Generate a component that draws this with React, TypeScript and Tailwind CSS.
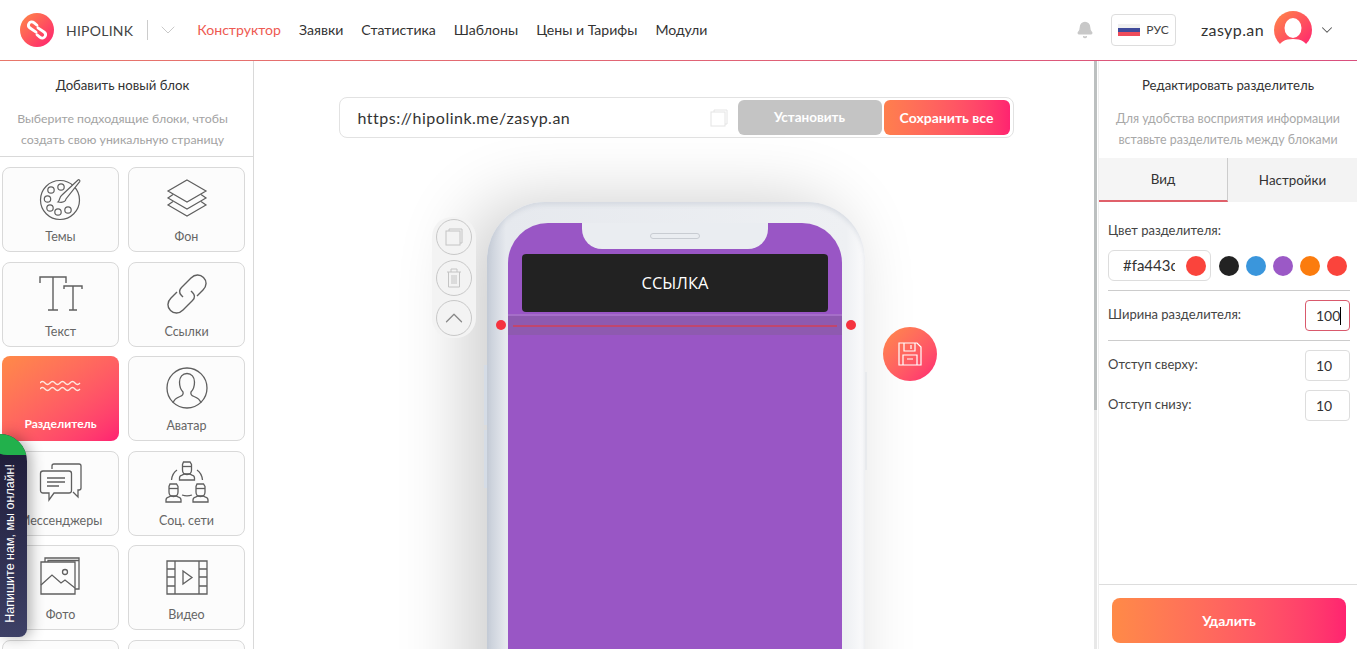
import React from 'react';
import { Bell, ChevronDown, ChevronUp } from 'lucide-react';

const font = { fontFamily: '"Lato", "Noto Sans", sans-serif' };

const Grad = ({ id }: { id: string }) => (
    <defs>
        <linearGradient id={id} x1="0" y1="0" x2="1" y2="1">
            <stop offset="0" stopColor="#ff8a47" />
            <stop offset="1" stopColor="#ff1f72" />
        </linearGradient>
    </defs>
);

const Logo = () => (
    <svg width="34" height="34" viewBox="0 0 36 36">
        <Grad id="logoGrad" />
        <circle cx="18" cy="18" r="18" fill="url(#logoGrad)" />
        <g fill="none" stroke="#fff" strokeWidth="3" strokeLinecap="round">
            <path d="M18 13l-3-2.5c-2-1.7-4.6-1.2-5.6.7-.9 1.7-.4 3.6 1.2 4.7l6.4 4.4" />
            <path d="M18 23l3 2.5c2 1.7 4.6 1.2 5.6-.7.9-1.7.4-3.6-1.2-4.7l-6.4-4.4" />
        </g>
    </svg>
);

const iconProps = {
    width: 44,
    height: 44,
    viewBox: '0 0 44 44',
    fill: 'none',
    stroke: '#5f5f5f',
    strokeWidth: 1.2,
};

const IconPalette = () => (
    <svg {...iconProps}>
        <circle cx="21" cy="23" r="19.5" />
        <circle cx="22" cy="10" r="3.2" />
        <circle cx="12" cy="13" r="3.2" />
        <circle cx="8.5" cy="22" r="3.2" />
        <circle cx="11" cy="31" r="3.2" />
        <circle cx="19" cy="35" r="3.2" />
        <circle cx="29" cy="33" r="3.2" />
        <path d="M23 18L39 3c1-.8 2.400.6 1.700 1.600L27 22c-.5 2.500-3 4-8 3 2-1.500 1-5 4-7z" fill="#fcfcfc" />
    </svg>
);

const IconLayers = () => (
    <svg {...iconProps}>
        <path d="M22 3L41 14 22 25 3 14z" />
        <path d="M8 17.500L3 21 22 32 41 21 36 17.500" />
        <path d="M8 24.500L3 28 22 39 41 28 36 24.500" />
    </svg>
);

const IconText = () => (
    <svg {...iconProps} strokeWidth={1.4}>
        <path d="M1 11V5h26v6M14 5v33M9 38h10" />
        <path d="M25 17v-3h18v3M34 14v24M30 38h8" />
    </svg>
);

const IconLink = () => (
    <svg {...iconProps} strokeWidth={1.4}>
        <path d="M18 25l-1.500-1.500c-2.500-2.500-2.500-5.500 0-8L26 6c4-4 9-4 12.500-.5S42 14 38 18l-6 6" />
        <path d="M26 19l1.500 1.500c2.500 2.500 2.500 5.500 0 8L18 38c-4 4-9 4-12.500.5S2 30 6 26l6-6" />
    </svg>
);

const IconWaves = () => (
    <svg width="42" height="12" viewBox="0 0 42 12" fill="none" stroke="#ffe8e0" strokeWidth="1.3">
        <path d="M0 3q2.500-3 5 0t5 0 5 0 5 0 5 0 5 0 5 0 5 0" />
        <path d="M0 9q2.500-3 5 0t5 0 5 0 5 0 5 0 5 0 5 0 5 0" />
    </svg>
);

const IconAvatar = () => (
    <svg {...iconProps} strokeWidth={1.3}>
        <circle cx="22" cy="22" r="20" />
        <path d="M8 37c1-3.500 3-5 7-6.500 3-1 3.500-2.500 3-4.500-2.500-2.500-3.500-6-3.500-10 0-5 3-8.500 7.500-8.500S29.500 11 29.500 16c0 4-1 7.500-3.500 10-.5 2 0 3.500 3 4.500 4 1.500 6 3 7 6.500" />
    </svg>
);

const IconChat = () => (
    <svg {...iconProps} strokeWidth={1.3}>
        <path d="M13 8V5c0-1.500 1-2 2-2h25c1 0 2 .5 2 2v22c0 1-1 2-2 2h-1v7l-5-5" />
        <path d="M4 10h26c1.500 0 2.500 1 2.500 2.500v17c0 1.500-1 2.500-2.500 2.500H15l-5 7v-7H4c-1.500 0-2.500-1-2.500-2.500v-17C1.500 11 2.500 10 4 10z" fill="#fcfcfc" />
        <path d="M8 17h18M8 21h18M8 25h12" />
    </svg>
);

const Person = ({ x, y }: { x: number; y: number }) => (
    <g transform={`translate(${x} ${y})`}>
        <path d="M4 0h6.500L12 2.500V8c0 3-2 4.500-4.500 4.500S3 11 3 8V2.500z" />
        <path d="M3 4.500h9" />
        <path d="M0 18v-2c0-1.500 1-2.500 2.500-2.800L5 12h5l2.500 1.200c1.500.3 2.500 1.300 2.500 2.800v2z" />
    </g>
);

const IconSocial = () => (
    <svg {...iconProps} strokeWidth={1.3}>
        <Person x={14.500} y={1} />
        <Person x={1} y={23} />
        <Person x={28} y={23} />
        <path d="M12 9c-3 2-5 5-5.500 10M32 9c3 2 5 5 5.500 10M17 34c3 1 7 1 10 0" />
    </svg>
);

const IconPhoto = () => (
    <svg {...iconProps} strokeWidth={1.3}>
        <path d="M6 7V3h34v31h-4" />
        <path d="M9 7V5.500h31" />
        <path d="M2 7h34v32H2z" fill="#fcfcfc" />
        <path d="M2 30l11-10 9 8 4-3 10 8" />
        <circle cx="26" cy="17" r="2.500" />
    </svg>
);

const IconVideo = () => (
    <svg {...iconProps} strokeWidth={1.3}>
        <path d="M2 6h40v33H2z" />
        <path d="M10 6v33M34 6v33M2 14h8M2 22h8M2 31h8M34 14h8M34 22h8M34 31h8" />
        <path d="M18 16l9 6.500-9 6.500z" />
    </svg>
);

const blocks = [
    { label: 'Темы', icon: <IconPalette /> },
    { label: 'Фон', icon: <IconLayers /> },
    { label: 'Текст', icon: <IconText /> },
    { label: 'Ссылки', icon: <IconLink /> },
    { label: 'Разделитель', icon: <IconWaves />, active: true },
    { label: 'Аватар', icon: <IconAvatar /> },
    { label: 'Мессенджеры', icon: <IconChat /> },
    { label: 'Соц. сети', icon: <IconSocial /> },
    { label: 'Фото', icon: <IconPhoto /> },
    { label: 'Видео', icon: <IconVideo /> },
    { label: '', icon: null },
    { label: '', icon: null },
];

const BlockCard = ({ label, icon, active }: { label: string; icon: React.ReactNode; active?: boolean }) => (
    <div
        className={`h-[85px] rounded-lg flex flex-col items-center ${
            active
                ? 'bg-gradient-to-br from-[#ff8a47] to-[#ff1f72] text-white font-bold pt-[24px]'
                : 'bg-[#fcfcfc] border border-[#d9d9d9] text-[#666] pt-[8px]'
        }`}
    >
        <div className={active ? 'h-[34px]' : 'h-[46px] flex items-center'}>{icon}</div>
        <span className={`leading-4 ${active ? 'text-[12px] mt-[2px]' : 'text-[12.500px] mt-[7px]'}`}>{label}</span>
    </div>
);

const NavLink = ({ children, active }: { children: React.ReactNode; active?: boolean }) => (
    <span className={`text-[14.100px] ${active ? 'text-[#ee5a52]' : 'text-[#333]'}`}>{children}</span>
);

const Header = () => (
    <header className="shrink-0 bg-white">
        <div className="h-[60px] flex items-center pl-[20px] pr-[21px]">
            <Logo />
            <span className="ml-[12px] text-[14px] tracking-[0.25px] text-[#444]">HIPOLINK</span>
            <div className="ml-[14px] h-[20px] w-px bg-[#ccc]" />
            <ChevronDown size={24} strokeWidth={0.8} className="ml-[8px] text-[#bbb]" />
            <nav className="ml-[17px] flex gap-[18px]">
                <NavLink active>Конструктор</NavLink>
                <NavLink>Заявки</NavLink>
                <NavLink>Статистика</NavLink>
                <NavLink>Шаблоны</NavLink>
                <NavLink>Цены и Тарифы</NavLink>
                <NavLink>Модули</NavLink>
            </nav>
            <div className="ml-auto flex items-center">
                <Bell size={18} fill="#c8c8c8" stroke="#c8c8c8" />
                <div className="ml-[17px] w-[65px] h-[32px] border border-[#ddd] rounded flex items-center justify-center gap-[6px]">
                    <div className="w-[22px] h-[12px] flex flex-col">
                        <div className="h-1 bg-[#f0f0f0]" />
                        <div className="h-1 bg-[#3f4a9a]" />
                        <div className="h-1 bg-[#ee4b5a]" />
                    </div>
                    <span className="text-[12px] text-[#444]">РУС</span>
                </div>
                <span className="ml-[25px] text-[16px] text-[#333] tracking-[0.4px]">zasyp.an</span>
                <svg width="40" height="40" viewBox="0 0 40 40" className="ml-[9px]">
                    <Grad id="avatarGrad" />
                    <circle cx="20" cy="20" r="19" fill="url(#avatarGrad)" />
                    <ellipse cx="20" cy="18" rx="8.500" ry="10" fill="#fff" />
                    <path d="M4 40c2-8 8-11 16-11s14 3 16 11z" fill="#fff" />
                </svg>
                <ChevronDown size={18} strokeWidth={1.4} className="ml-[5px] text-[#555]" />
            </div>
        </div>
        <div className="h-px bg-gradient-to-r from-[#e8776a] to-[#d94f7e]" />
    </header>
);

const LeftPanel = () => (
    <aside className="w-[254px] shrink-0 border-r border-[#d9d9d9] flex flex-col overflow-hidden">
        <div className="h-[96px] shrink-0 border-b border-[#d9d9d9] text-center pr-[8px]">
            <div className="mt-[14px] text-[13.200px] leading-5 text-[#333]">Добавить новый блок</div>
            <div className="mt-[13px] text-[12.300px] leading-[21px] text-[#a3a3a3]">
                Выберите подходящие блоки, чтобы
                <br />
                создать свою уникальную страницу
            </div>
        </div>
        <div className="pt-[10px] pl-[2px] grid grid-cols-[117px_117px] gap-x-[9px] gap-y-[9.500px]">
            {blocks.map((b, i) => (
                <BlockCard key={i} label={b.label} icon={b.icon} active={b.active} />
            ))}
        </div>
    </aside>
);

const RoundTool = ({ children }: { children: React.ReactNode }) => (
    <div className="w-[36px] h-[36px] rounded-full border border-[#c8c8c8] flex items-center justify-center">{children}</div>
);

const Phone = () => (
    <div className="relative mt-[64px] w-[378px] h-[600px] shrink-0 rounded-t-[58px] bg-[linear-gradient(90deg,#c5ccd7_0%,#e6e9ee_5%,#eef0f3_95%,#fbfbfc_100%)] shadow-[-20px_0_70px_rgba(0,0,0,0.2),inset_0_3px_4px_rgba(190,197,208,0.45)] pt-[21px] pl-[21px] pr-[23px]">
        <div className="absolute left-[-3px] top-[163px] w-[3px] h-[60px] bg-[#d5dce6]" />
        <div className="absolute left-[-3px] top-[228px] w-[3px] h-[58px] bg-[#d5dce6]" />
        <div className="absolute right-[-2px] top-[170px] w-[2px] h-[98px] bg-[#e8eaed]" />
        <div className="relative h-full rounded-t-[40px] bg-[#9956c5] pt-[31px]">
            <div className="absolute top-0 left-[74px] w-[186px] h-[26px] rounded-b-[20px] bg-[#eaedf1] flex items-center justify-center">
                <div className="w-[50px] h-[6px] rounded-full border border-[#c8ccd2]" />
            </div>
            <div className="mx-[14px] h-[58px] rounded-sm bg-[#222] flex items-center justify-center text-white text-[16.500px] font-medium [font-family:'Open_Sans',sans-serif]">
                ССЫЛКА
            </div>
            <div className="mt-[2px] h-[21px] bg-[#8e5ab0] border-t-2 border-[#a56ec8] flex items-center px-[5px]">
                <div className="w-full h-[2px] bg-[#c0466e]" />
            </div>
        </div>
        <div className="absolute left-[9px] top-[118px] w-[10px] h-[10px] rounded-full bg-[#f5333f]" />
        <div className="absolute right-[9px] top-[118px] w-[10px] h-[10px] rounded-full bg-[#f5333f]" />
        <div className="absolute left-[-55px] top-[15px] w-[44px] flex flex-col items-center gap-[4.500px] py-[2px] bg-[#f3f3f3] rounded-[20px]">
            <RoundTool>
                <svg width="18" height="18" viewBox="0 0 18 18" fill="none" stroke="#c4c4c4" strokeWidth="1">
                    <path d="M4 3V1h13v14h-2" />
                    <rect x="1" y="3" width="14" height="14" />
                </svg>
            </RoundTool>
            <RoundTool>
                <svg width="16" height="20" viewBox="0 0 16 20" fill="none" stroke="#c4c4c4" strokeWidth="1">
                    <path d="M1 4h14M5 4V1h6v3M2.500 4v15h11V4M6 7v9M8 7v9M10 7v9" />
                </svg>
            </RoundTool>
            <RoundTool>
                <ChevronUp size={30} strokeWidth={1} className="text-[#888]" />
            </RoundTool>
        </div>
        <div className="absolute right-[-72px] top-[125px] w-[54px] h-[54px] rounded-full bg-gradient-to-br from-[#ff8a47] to-[#ff1f72] flex items-center justify-center">
            <svg width="24" height="24" viewBox="0 0 24 24" fill="none" stroke="#fff" strokeWidth="1.200">
                <path d="M1 1h18l4 4v18H1z" />
                <path d="M6 1v8h11V1M13 3v4M5 23V13h14v10M9 17h6" />
            </svg>
        </div>
    </div>
);

const CenterPanel = () => (
    <main className="flex-1 min-w-0 flex flex-col items-center overflow-hidden">
        <div className="mt-[36px] w-[675px] h-[41px] shrink-0 flex items-center border border-[#e2e2e2] rounded-lg pr-[3px] bg-white">
            <span className="ml-[18px] text-[16px] tracking-[0.5px] text-[#333]">https://hipolink.me/zasyp.an</span>
            <svg width="18" height="18" viewBox="0 0 18 18" fill="none" stroke="#e4e4e4" strokeWidth="1" className="ml-auto mr-[10px]">
                <path d="M4 3V1h13v14h-2" />
                <rect x="1" y="3" width="14" height="14" />
            </svg>
            <div className="w-[144px] h-[35px] rounded-md bg-[#c4c4c4] text-white font-bold text-[13.500px] flex items-center justify-center">Установить</div>
            <div className="ml-[2px] w-[126px] h-[35px] rounded-md bg-gradient-to-r from-[#ff7f4d] to-[#ff2370] text-white text-[14px] font-bold flex items-center justify-center">Сохранить все</div>
        </div>
        <Phone />
    </main>
);

const Swatch = ({ className }: { className: string }) => <div className={`w-5 h-5 rounded-full shrink-0 ${className}`} />;

const NumberField = ({ value, focused }: { value: string; focused?: boolean }) => (
    <div className={`ml-auto w-[45px] h-[31px] rounded border pl-[10px] flex items-center text-[14px] text-[#333] ${focused ? 'border-[#d9596c]' : 'border-[#ddd]'}`}>
        {value}
        {focused && <span className="w-px h-[18px] bg-black" />}
    </div>
);

const RightPanel = () => (
    <aside className="relative w-[259px] shrink-0 flex flex-col border-l border-[#eee]">
        <div className="absolute left-[-5px] top-0 bottom-0 w-[3px] bg-[#e8e8e8]">
            <div className="h-[349px] bg-[#bcc0c0]" />
        </div>
        <div className="h-[97px] shrink-0 text-center">
            <div className="mt-[14px] text-[13.200px] leading-5 text-[#333]">Редактировать разделитель</div>
            <div className="mt-[13px] text-[12.400px] leading-[21px] text-[#a8a8a8]">
                Для удобства восприятия информации
                <br />
                вставьте разделитель между блоками
            </div>
        </div>
        <div className="h-[44px] shrink-0 grid grid-cols-2 text-[13.400px] text-[#333]">
            <div className="bg-[#f5f5f5] border-r border-[#ccc] border-b-2 border-b-[#e0606a] flex items-center justify-center">Вид</div>
            <div className="bg-[#f3f3f3] flex items-center justify-center">Настройки</div>
        </div>
        <div className="pl-[9px] pr-[7px] pt-[18px] text-[13px] text-[#444]">
            <div className="leading-5">Цвет разделителя:</div>
            <div className="mt-[10px] flex items-center">
                <div className="w-[103px] h-[31px] rounded-md border border-[#ddd] flex items-center pl-[14px] text-[15px] text-[#333]">
                    <span className="w-[52px] overflow-hidden whitespace-nowrap">#fa443c</span>
                    <Swatch className="ml-[11px] bg-[#fa443c]" />
                </div>
                <div className="ml-[8px] flex gap-[7px]">
                    <Swatch className="bg-[#222]" />
                    <Swatch className="bg-[#3a96dc]" />
                    <Swatch className="bg-[#9b59c6]" />
                    <Swatch className="bg-[#fb7c0e]" />
                    <Swatch className="bg-[#fa443c]" />
                </div>
            </div>
            <div className="mt-[9px] border-t border-[#ccc]" />
            <div className="mt-[9px] flex items-center">
                <span className="mb-[2px]">Ширина разделителя:</span>
                <NumberField value="100" focused />
            </div>
            <div className="mt-[9px] border-t border-[#ccc]" />
            <div className="mt-[9px] flex items-center">
                <span className="mb-[2px]">Отступ сверху:</span>
                <NumberField value="10" />
            </div>
            <div className="mt-[9px] flex items-center">
                <span className="mb-[2px]">Отступ снизу:</span>
                <NumberField value="10" />
            </div>
        </div>
        <div className="mt-auto h-[65px] border-t border-[#ddd] px-[13px] pt-[13px]">
            <div className="w-[234px] h-[45px] rounded-lg bg-gradient-to-r from-[#ff8a47] to-[#ff2370] text-white text-[14px] font-bold flex items-center justify-center">Удалить</div>
        </div>
    </aside>
);

const ChatTab = () => (
    <div className="absolute left-0 top-[434px] w-[27px] h-[203px] rounded-tr-[28px] rounded-br-lg bg-gradient-to-b from-[#1d1a36] to-[#3d4066] shadow-[4px_0_14px_rgba(0,0,0,0.3)] overflow-hidden flex items-center justify-center pr-[6px]">
        <div className="absolute left-[-14px] top-[-21px] w-[80px] h-[42px] rounded-full bg-[#22b14c]" />
        <span className="[writing-mode:vertical-rl] rotate-180 text-white text-[12.500px] whitespace-nowrap mt-[16px] [font-family:'Liberation_Sans',sans-serif]">
            Напишите нам, мы онлайн!
        </span>
    </div>
);

export default function App() {
    return (
        <div className="relative h-[649px] overflow-hidden bg-white flex flex-col" style={font}>
            <Header />
            <div className="flex-1 min-h-0 flex">
                <LeftPanel />
                <CenterPanel />
                <RightPanel />
            </div>
            <ChatTab />
        </div>
    );
}
